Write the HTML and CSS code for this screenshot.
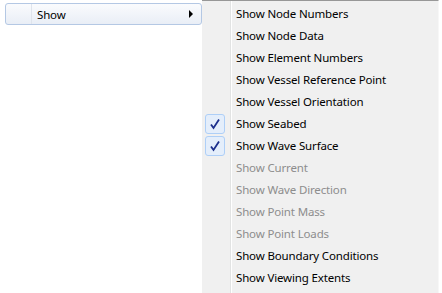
FILE: index.html
```html
<!DOCTYPE html>
<html lang="en">
<head>
    <meta charset="UTF-8">
    <title>Show menu</title>
    <link rel="stylesheet" href="styles.css">
</head>
<body>
    <div class="screen">
        <div class="menu">
            <div class="menu-item active">
                <span class="gutter"></span>
                <span class="label">Show</span>
                <span class="arrow"></span>
            </div>
        </div>
        <div class="submenu">
            <div class="sub-item"><span class="check"></span><span class="label">Show Node Numbers</span></div>
            <div class="sub-item"><span class="check"></span><span class="label">Show Node Data</span></div>
            <div class="sub-item"><span class="check"></span><span class="label">Show Element Numbers</span></div>
            <div class="sub-item"><span class="check"></span><span class="label">Show Vessel Reference Point</span></div>
            <div class="sub-item"><span class="check"></span><span class="label">Show Vessel Orientation</span></div>
            <div class="sub-item checked">
                <span class="check"><svg width="12" height="12" viewBox="0 0 12 12"><path d="M2 6.5 L4.5 10 L10 1.5" fill="none" stroke="#1c2f8c" stroke-width="1.8"/></svg></span>
                <span class="label">Show Seabed</span>
            </div>
            <div class="sub-item checked">
                <span class="check"><svg width="12" height="12" viewBox="0 0 12 12"><path d="M2 6.5 L4.5 10 L10 1.5" fill="none" stroke="#1c2f8c" stroke-width="1.8"/></svg></span>
                <span class="label">Show Wave Surface</span>
            </div>
            <div class="sub-item disabled"><span class="check"></span><span class="label">Show Current</span></div>
            <div class="sub-item disabled"><span class="check"></span><span class="label">Show Wave Direction</span></div>
            <div class="sub-item disabled"><span class="check"></span><span class="label">Show Point Mass</span></div>
            <div class="sub-item disabled"><span class="check"></span><span class="label">Show Point Loads</span></div>
            <div class="sub-item"><span class="check"></span><span class="label">Show Boundary Conditions</span></div>
            <div class="sub-item"><span class="check"></span><span class="label">Show Viewing Extents</span></div>
        </div>
    </div>
</body>
</html>
```
FILE: styles.css
```css
body {
    margin: 0;
    background: #fff;
    font-family: "Noto Sans", "Open Sans", sans-serif;
    font-size: 11.5px;
    letter-spacing: -0.15px;
    color: #000;
}
.screen {
    display: flex;
    width: 442px;
    height: 293px;
    overflow: hidden;
}
.menu {
    width: 197px;
    padding: 3px 0 0 5px;
}
.menu-item {
    display: flex;
    align-items: center;
    height: 20px;
}
.menu-item.active {
    border: 1px solid #b4c8e4;
    border-radius: 3px;
    background: linear-gradient(#fafbfd, #e9eef6);
}
.menu-item .gutter {
    width: 25px;
    height: 100%;
    border-right: 1px solid #dfe4ec;
}
.menu-item .label {
    flex: 1;
    padding-left: 5px;
}
.arrow {
    width: 0;
    height: 0;
    border-top: 4px solid transparent;
    border-bottom: 4px solid transparent;
    border-left: 4px solid #000;
    margin-right: 8px;
}
.submenu {
    width: 236px;
    height: 290px;
    padding-top: 2px;
    background: #f0f0f0;
    border-top: 1px solid #979797;
    border-right: 1px solid #f7f7f7;
    background-image: linear-gradient(to right, transparent 28px, #e2e3e3 28px, #e2e3e3 29px, #fff 29px, #fff 30px, transparent 30px);
}
.sub-item {
    display: flex;
    align-items: center;
    height: 22px;
    padding-bottom: 1px;
    box-sizing: border-box;
}
.check {
    width: 20px;
    height: 20px;
    margin: 0 11px 0 3px;
    display: flex;
    align-items: center;
    justify-content: center;
}
.checked .check {
    width: 18px;
    height: 18px;
    border: 1px solid #aecff7;
    border-radius: 3px;
    background: #e4eefb;
    margin-top: 1px;
}
.label {
    white-space: nowrap;
}
.disabled .label {
    color: #8d8d8d;
}
```
